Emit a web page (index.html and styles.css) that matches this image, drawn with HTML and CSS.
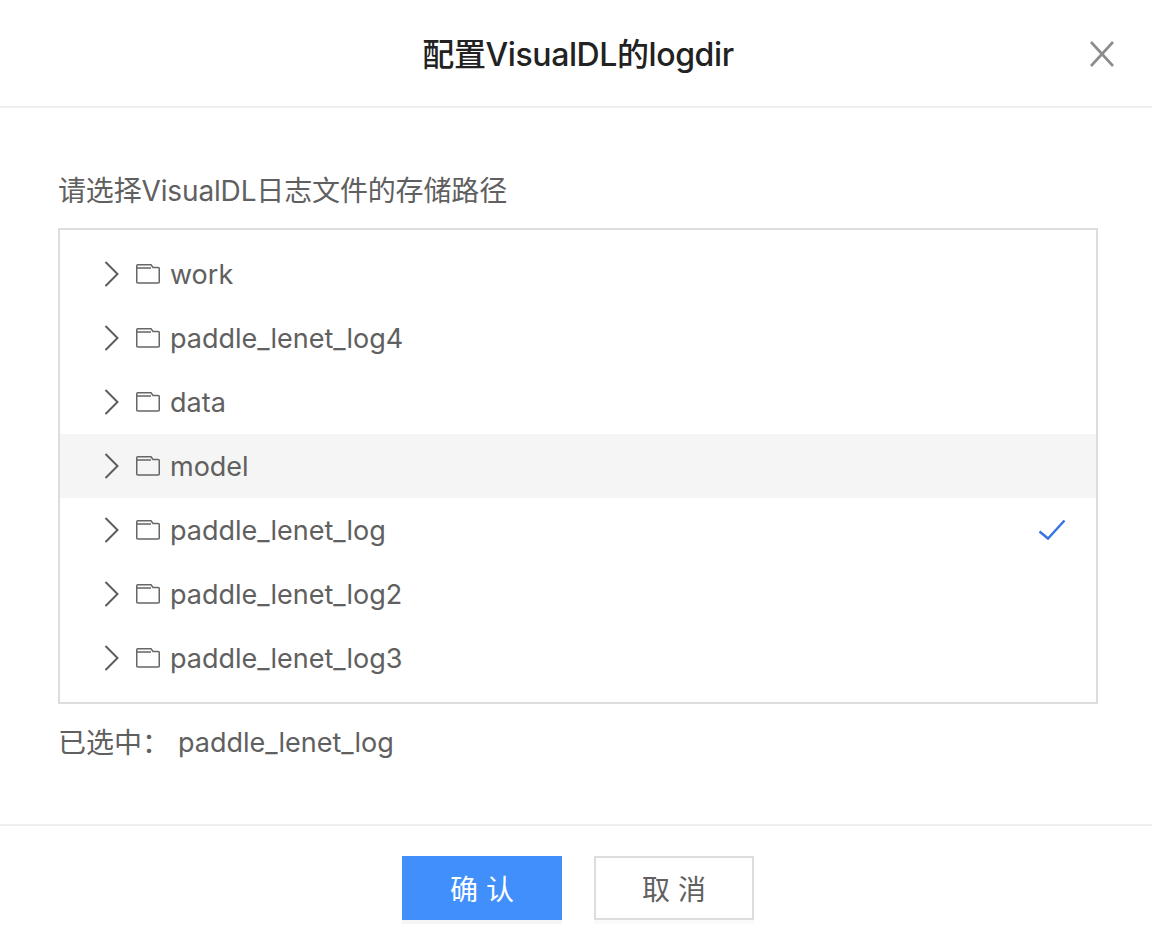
FILE: index.html
```html
<!DOCTYPE html>
<html lang="en">
<head>
  <meta charset="UTF-8">
  <title>配置VisualDL的logdir</title>
  <link rel="stylesheet" href="styles.css">
</head>
<body>

<div class="dialog">
  <div class="dialog-header">
    <h2>配置VisualDL的logdir</h2>
    <svg class="close-icon" width="26" height="26" viewBox="0 0 26 26"><path d="M2 1L24 25M24 1L2 25"/></svg>
  </div>

  <div class="dialog-body">
    <div class="path-label">请选择VisualDL日志文件的存储路径</div>

    <div class="tree">
      <div class="tree-row">
        <svg class="arrow" width="16" height="26" viewBox="0 0 16 26"><path d="M1.5 1L13.5 13L1.5 25"/></svg>
        <svg class="folder" width="24" height="20" viewBox="0 0 24 20"><path d="M.75 18V1.75Q.75 .75 1.75 .75H15L17 3.5H22.25Q23.25 3.5 23.25 4.5V18Q23.25 19 22.25 19H1.75Q.75 19 .75 18ZM.75 4H15"/></svg>
        <span>work</span>
      </div>
      <div class="tree-row">
        <svg class="arrow" width="16" height="26" viewBox="0 0 16 26"><path d="M1.5 1L13.5 13L1.5 25"/></svg>
        <svg class="folder" width="24" height="20" viewBox="0 0 24 20"><path d="M.75 18V1.75Q.75 .75 1.75 .75H15L17 3.5H22.25Q23.25 3.5 23.25 4.5V18Q23.25 19 22.25 19H1.75Q.75 19 .75 18ZM.75 4H15"/></svg>
        <span>paddle_lenet_log4</span>
      </div>
      <div class="tree-row">
        <svg class="arrow" width="16" height="26" viewBox="0 0 16 26"><path d="M1.5 1L13.5 13L1.5 25"/></svg>
        <svg class="folder" width="24" height="20" viewBox="0 0 24 20"><path d="M.75 18V1.75Q.75 .75 1.75 .75H15L17 3.5H22.25Q23.25 3.5 23.25 4.5V18Q23.25 19 22.25 19H1.75Q.75 19 .75 18ZM.75 4H15"/></svg>
        <span>data</span>
      </div>
      <div class="tree-row hover">
        <svg class="arrow" width="16" height="26" viewBox="0 0 16 26"><path d="M1.5 1L13.5 13L1.5 25"/></svg>
        <svg class="folder" width="24" height="20" viewBox="0 0 24 20"><path d="M.75 18V1.75Q.75 .75 1.75 .75H15L17 3.5H22.25Q23.25 3.5 23.25 4.5V18Q23.25 19 22.25 19H1.75Q.75 19 .75 18ZM.75 4H15"/></svg>
        <span>model</span>
      </div>
      <div class="tree-row">
        <svg class="arrow" width="16" height="26" viewBox="0 0 16 26"><path d="M1.5 1L13.5 13L1.5 25"/></svg>
        <svg class="folder" width="24" height="20" viewBox="0 0 24 20"><path d="M.75 18V1.75Q.75 .75 1.75 .75H15L17 3.5H22.25Q23.25 3.5 23.25 4.5V18Q23.25 19 22.25 19H1.75Q.75 19 .75 18ZM.75 4H15"/></svg>
        <span>paddle_lenet_log</span>
        <svg class="check" width="28" height="22" viewBox="0 0 28 22"><path d="M1.5 12.5L10 19.5L26.5 1.5"/></svg>
      </div>
      <div class="tree-row">
        <svg class="arrow" width="16" height="26" viewBox="0 0 16 26"><path d="M1.5 1L13.5 13L1.5 25"/></svg>
        <svg class="folder" width="24" height="20" viewBox="0 0 24 20"><path d="M.75 18V1.75Q.75 .75 1.75 .75H15L17 3.5H22.25Q23.25 3.5 23.25 4.5V18Q23.25 19 22.25 19H1.75Q.75 19 .75 18ZM.75 4H15"/></svg>
        <span>paddle_lenet_log2</span>
      </div>
      <div class="tree-row">
        <svg class="arrow" width="16" height="26" viewBox="0 0 16 26"><path d="M1.5 1L13.5 13L1.5 25"/></svg>
        <svg class="folder" width="24" height="20" viewBox="0 0 24 20"><path d="M.75 18V1.75Q.75 .75 1.75 .75H15L17 3.5H22.25Q23.25 3.5 23.25 4.5V18Q23.25 19 22.25 19H1.75Q.75 19 .75 18ZM.75 4H15"/></svg>
        <span>paddle_lenet_log3</span>
      </div>
    </div>

    <div class="selected">
      <span class="selected-label">已选中：</span>
      <span>paddle_lenet_log</span>
    </div>
  </div>

  <div class="dialog-footer">
    <button type="button" class="btn btn-primary">确 认</button>
    <button type="button" class="btn">取 消</button>
  </div>
</div>

</body>
</html>
```

FILE: styles.css
```css
body {
  margin: 0;
  font-family: Inter, 'Noto Sans CJK SC', sans-serif;
  background-color: #fff;
  color: #606060;
}

.dialog {
  width: 1152px;
  height: 950px;
  display: flex;
  flex-direction: column;
}

.dialog-header {
  height: 106px;
  box-sizing: content-box;
  border-bottom: 2px solid #eee;
  display: flex;
  justify-content: center;
  align-items: center;
  position: relative;
}

h2 {
  margin: 0 0 3px 4px;
  font-size: 32px;
  font-weight: 500;
  letter-spacing: -0.4px;
  color: #222;
}

.close-icon {
  position: absolute;
  left: 1089px;
  top: 41px;
}

.close-icon path {
  fill: none;
  stroke: #8c8c8c;
  stroke-width: 2.6;
}

.dialog-body {
  height: 716px;
  padding: 0 54px 0 58px;
  border-bottom: 2px solid #eee;
}

.path-label {
  height: 120px;
  padding-top: 66px;
  box-sizing: border-box;
  font-size: 28px;
  letter-spacing: -0.15px;
  line-height: 34px;
}

.tree {
  height: 476px;
  box-sizing: border-box;
  border: 2px solid #ddd;
  padding-top: 12px;
}

.tree-row {
  height: 64px;
  display: flex;
  align-items: center;
  padding: 0 30px 0 44px;
  font-size: 27px;
}

.tree-row.hover {
  background-color: #f5f5f5;
}

.arrow path {
  fill: none;
  stroke: #5c5c5c;
  stroke-width: 2;
}

.folder {
  margin-left: 16px;
  margin-right: 10px;
}

.folder path {
  fill: none;
  stroke: #666;
  stroke-width: 1.5;
}

.check {
  margin-left: auto;
}

.check path {
  fill: none;
  stroke: #3874e0;
  stroke-width: 2.4;
}

.selected {
  margin-top: 21px;
  font-size: 27px;
  line-height: 36px;
  display: flex;
}

.selected-label {
  width: 120px;
  font-size: 28px;
}

.dialog-footer {
  display: flex;
  justify-content: center;
  gap: 32px;
  padding-top: 30px;
  padding-left: 4px;
}

.btn {
  width: 160px;
  height: 64px;
  border: 2px solid #ddd;
  border-radius: 0;
  background-color: #fff;
  color: #606060;
  font-family: inherit;
  font-size: 28px;
  padding: 0;
  box-shadow: 0 4px 0 #fafafa;
}

.btn-primary {
  border: none;
  background-color: #418ffa;
  color: #fff;
  box-shadow: 0 4px 0 #f5f5f5;
}
```
